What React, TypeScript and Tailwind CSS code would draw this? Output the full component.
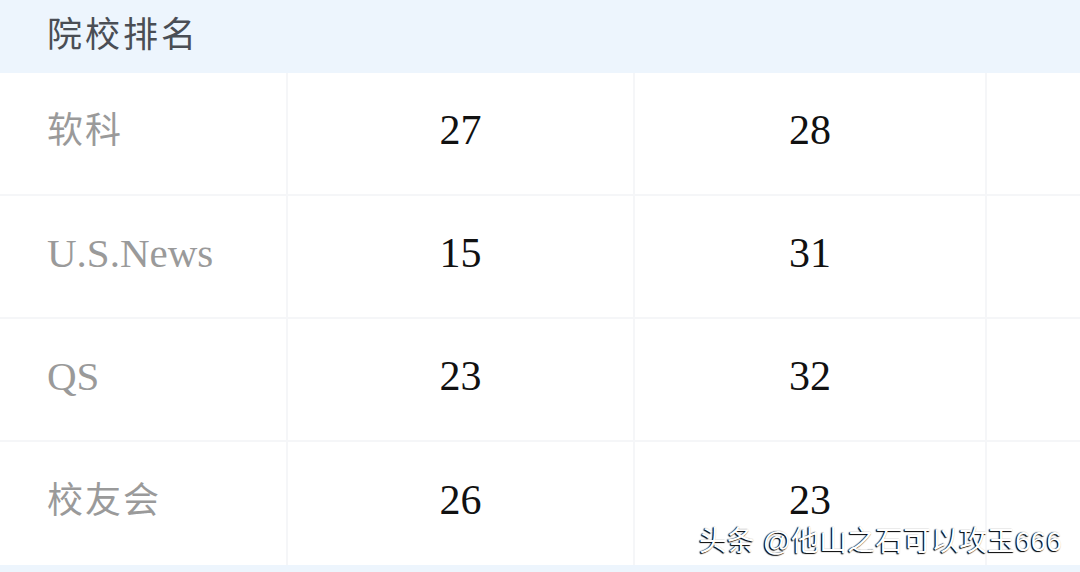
import React from "react";

const rows: { label: string; cjk: boolean; a: string; b: string }[] = [
  { label: "软科", cjk: true, a: "27", b: "28" },
  { label: "U.S.News", cjk: false, a: "15", b: "31" },
  { label: "QS", cjk: false, a: "23", b: "32" },
  { label: "校友会", cjk: true, a: "26", b: "23" },
];

const serif = { fontFamily: '"Liberation Serif", "Noto Sans CJK SC", serif' };

export default function App() {
  return (
    <div className="relative w-[1080px] h-[572px] overflow-hidden bg-white" style={serif}>
      <div className="h-[73px] bg-[#edf5fd] flex items-center pl-[47px] pb-[2px]">
        <span className="text-[35px] leading-none text-[#4a4e55] tracking-[3px]">院校排名</span>
      </div>
      <div className="grid grid-cols-[286px_345px_350px_1fr] grid-rows-[121px_121px_121px_123px] gap-[2px] bg-[#f5f6f8]">
        {rows.map((r) => (
          <React.Fragment key={r.label}>
            <div className="bg-white flex items-center pl-[47px] pb-[6px]">
              <span
                className={
                  r.cjk
                    ? "text-[36px] leading-none text-[#9a9a9a] tracking-[2px]"
                    : "text-[41px] leading-none text-[#9a9a9a]"
                }
              >
                {r.label}
              </span>
            </div>
            <div className="bg-white flex items-center justify-center pb-[8px]">
              <span className="text-[42px] leading-none text-[#111]">{r.a}</span>
            </div>
            <div className="bg-white flex items-center justify-center pb-[8px]">
              <span className="text-[42px] leading-none text-[#111]">{r.b}</span>
            </div>
            <div className="bg-white" />
          </React.Fragment>
        ))}
      </div>
      <div className="h-[7px] bg-[#edf5fd]" />
      <div
        className="absolute right-[18px] bottom-[16px] text-[28px] leading-none text-white whitespace-nowrap"
        style={{
          fontFamily: '"Liberation Sans", "Noto Sans CJK SC", sans-serif',
          textShadow: "-1px 1px 1px #000, -1px 0 1px #333",
        }}
      >
        头条 @他山之石可以攻玉666
      </div>
    </div>
  );
}
